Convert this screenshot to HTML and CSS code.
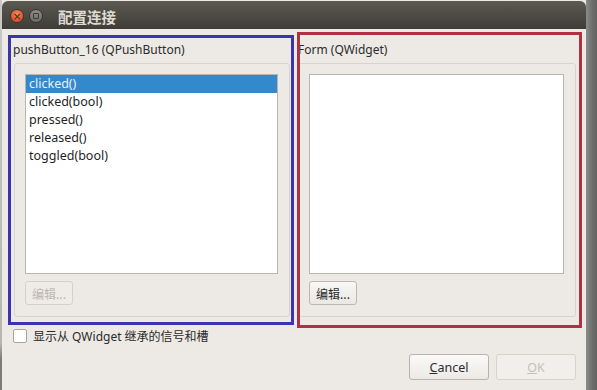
FILE: index.html
```html
<!DOCTYPE html>
<html lang="zh">

<head>
    <meta charset="UTF-8">
    <meta name="viewport" content="width=device-width, initial-scale=1.0">
    <title>配置连接</title>
    <link rel="stylesheet" href="styles.css">
</head>

<body>
    <div class="stage">
        <div class="desktopEdge"></div>
        <div class="window">
            <div class="titleBar">
                <span class="winBtn closeBtn">&times;</span>
                <span class="winBtn maxBtn"><span class="maxSquare"></span></span>
                <span class="winTitle">配置连接</span>
            </div>
            <div class="dialog">
                <div class="panes">
                    <div class="pane leftPane">
                        <div class="paneLabel">pushButton_16 (QPushButton)</div>
                        <div class="groupFrame">
                            <div class="signalList">
                                <div class="signalItem selected">clicked()</div>
                                <div class="signalItem">clicked(bool)</div>
                                <div class="signalItem">pressed()</div>
                                <div class="signalItem">released()</div>
                                <div class="signalItem">toggled(bool)</div>
                            </div>
                            <button class="editBtn" disabled>编辑...</button>
                        </div>
                    </div>
                    <div class="pane rightPane">
                        <div class="paneLabel">Form (QWidget)</div>
                        <div class="groupFrame">
                            <div class="signalList"></div>
                            <button class="editBtn">编辑...</button>
                        </div>
                    </div>
                </div>
                <label class="inheritRow">
                    <span class="checkBox"></span>
                    <span class="inheritText">显示从 QWidget 继承的信号和槽</span>
                </label>
                <div class="actionArea">
                    <button class="dlgBtn"><u>C</u>ancel</button>
                    <button class="dlgBtn" disabled><u>O</u>K</button>
                </div>
            </div>
        </div>
        <div class="windowShadow"></div>

        <!-- annotation boxes drawn over the dialog -->
        <div class="markBox markBlue"></div>
        <div class="markBox markRed"></div>
    </div>
</body>

</html>
```

FILE: styles.css
```css
* {
    margin: 0;
    padding: 0;
    box-sizing: border-box;
}

body {
    width: 597px;
    height: 390px;
    overflow: hidden;
    background-color: #6f6f6d;
    font-family: "Noto Sans", "Noto Sans CJK SC", sans-serif;
    font-size: 12.5px;
    color: #2b2b2b;
}

.stage {
    position: relative;
    width: 597px;
    height: 390px;
    display: flex;
}

.desktopEdge {
    width: 2px;
    height: 100%;
    background: linear-gradient(#c9c9c7 0%, #b5b5b3 88%, #7c7c7a 92%);
}

.window {
    width: 584px;
    height: 100%;
    display: flex;
    flex-direction: column;
    background-color: #edeae5;
}

.windowShadow {
    flex: 1;
    background: linear-gradient(90deg, #8b8b89, #6c6c6a 60%, #636361);
}

.titleBar {
    height: 28px;
    margin-top: 1px;
    border-radius: 6px 6px 0 0;
    background: linear-gradient(#5b5950, #3e3d38);
    display: flex;
    align-items: center;
    padding-left: 8px;
    padding-top: 2px;
    gap: 5px;
}

.winBtn {
    width: 14px;
    height: 14px;
    border-radius: 50%;
    display: flex;
    align-items: center;
    justify-content: center;
}

.closeBtn {
    background: radial-gradient(circle at 50% 35%, #f58a5c, #e1532a 70%);
    border: 1px solid #3a3630;
    color: #3b2a22;
    font-size: 11px;
    line-height: 1;
    font-family: "DejaVu Sans", sans-serif;
}

.maxBtn {
    background: linear-gradient(#8e8c85, #6f6d66);
    border: 1px solid #34332f;
}

.maxSquare {
    width: 6px;
    height: 6px;
    border: 1px solid #3a3934;
    border-radius: 1px;
}

.winTitle {
    margin-left: 10px;
    color: #dfdbd2;
    font-family: "Noto Sans CJK SC", sans-serif;
    font-weight: bold;
    font-size: 14.5px;
}

.dialog {
    flex: 1;
    display: flex;
    flex-direction: column;
    padding: 0 10px 0 11px;
}

.panes {
    display: flex;
    gap: 8px;
}

.pane {
    display: flex;
    flex-direction: column;
}

.leftPane {
    width: 277px;
}

.rightPane {
    width: 278px;
}

.paneLabel {
    height: 34px;
    padding-top: 12px;
    line-height: 18px;
    font-size: 12px;
    white-space: nowrap;
}

.groupFrame {
    height: 254px;
    border: 1px solid #d7d3cd;
    border-radius: 3px;
    padding: 10px 11px 10px 10px;
    display: flex;
    flex-direction: column;
    gap: 7px;
}

.leftPane .groupFrame {
    margin-left: 1px;
}

.signalList {
    height: 200px;
    background-color: #ffffff;
    border: 1px solid #b9b5af;
}

.signalItem {
    height: 18px;
    line-height: 18px;
    padding-left: 3px;
    color: #1f1f1f;
}

.signalItem.selected {
    background-color: #3389cb;
    color: #eaf2fa;
}

.editBtn {
    width: 48px;
    height: 24px;
    border: 1px solid #bcb8b1;
    border-radius: 3px;
    background: linear-gradient(#f8f7f5, #ebe8e4);
    font-family: "Noto Sans CJK SC", sans-serif;
    font-size: 12px;
    color: #2b2b2b;
}

.editBtn:disabled {
    color: #bab7b1;
    border-color: #d4d0ca;
    background: #efece8;
}

.inheritRow {
    display: flex;
    align-items: center;
    gap: 6px;
    margin-top: 12px;
    height: 14px;
}

.checkBox {
    width: 14px;
    height: 14px;
    border: 1px solid #aaa69f;
    border-radius: 2px;
    background-color: #ffffff;
}

.inheritText {
    font-size: 12px;
    white-space: nowrap;
}

.actionArea {
    display: flex;
    justify-content: flex-end;
    gap: 7px;
    margin-top: 11px;
}

.dlgBtn {
    width: 80px;
    height: 26px;
    border: 1px solid #b8b4ad;
    border-radius: 3px;
    background: linear-gradient(#fbfaf9, #ece9e5);
    font-family: "Noto Sans", sans-serif;
    font-size: 12.5px;
    color: #2b2b2b;
}

.dlgBtn:disabled {
    color: #c2bfb9;
    border-color: #d6d2cc;
    background: #f1efec;
}

.markBox {
    position: absolute;
    border: 3px solid;
    pointer-events: none;
}

.markBlue {
    left: 8px;
    top: 35px;
    width: 286px;
    height: 290px;
    border-color: #3a34b3;
}

.markRed {
    left: 297px;
    top: 32px;
    width: 285px;
    height: 296px;
    border-color: #ae3243;
}
```
